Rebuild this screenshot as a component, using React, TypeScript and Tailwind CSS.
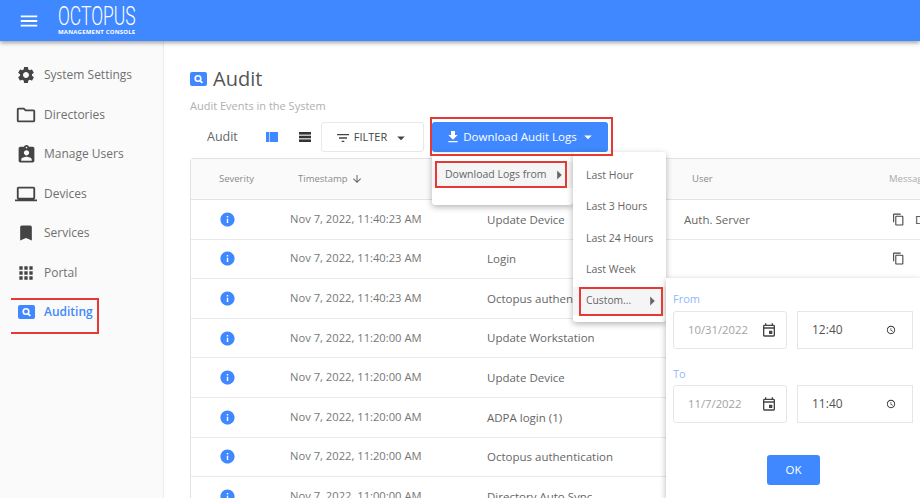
import {
  MdSettings,
  MdOutlineFolder,
  MdAssignmentInd,
  MdOutlineLaptop,
  MdBookmark,
  MdApps,
  MdMenu,
  MdFilterList,
  MdArrowDropDown,
  MdFileDownload,
  MdArrowRight,
  MdInfo,
  MdContentCopy,
  MdOutlineEvent,
  MdAccessTime,
  MdArrowDownward,
} from "react-icons/md";

const sidebarItems = [
  { label: "System Settings", icon: <MdSettings size={20} /> },
  { label: "Directories", icon: <MdOutlineFolder size={22} /> },
  { label: "Manage Users", icon: <MdAssignmentInd size={21} /> },
  { label: "Devices", icon: <MdOutlineLaptop size={22} /> },
  { label: "Services", icon: <MdBookmark size={20} /> },
  { label: "Portal", icon: <MdApps size={20} /> },
];

const rows = [
  { time: "Nov 7, 2022, 11:40:23 AM", event: "Update Device", user: "Auth. Server", message: "D" },
  { time: "Nov 7, 2022, 11:40:23 AM", event: "Login", user: "", message: "" },
  { time: "Nov 7, 2022, 11:40:23 AM", event: "Octopus authentication", user: "", message: "" },
  { time: "Nov 7, 2022, 11:20:00 AM", event: "Update Workstation", user: "", message: "" },
  { time: "Nov 7, 2022, 11:20:00 AM", event: "Update Device", user: "", message: "" },
  { time: "Nov 7, 2022, 11:20:00 AM", event: "ADPA login (1)", user: "", message: "" },
  { time: "Nov 7, 2022, 11:20:00 AM", event: "Octopus authentication", user: "", message: "" },
  { time: "Nov 7, 2022, 11:00:00 AM", event: "Directory Auto Sync", user: "", message: "" },
];

const ranges = ["Last Hour", "Last 3 Hours", "Last 24 Hours", "Last Week"];

// blue rounded square with the magnifier, used in the sidebar and the page title
function AuditIcon() {
  return (
    <svg width="17" height="14" viewBox="0 0 17 14" className="shrink-0">
      <rect width="17" height="14" rx="2" fill="#4088ff" />
      <circle cx="8" cy="6.5" r="2.8" fill="none" stroke="#fff" strokeWidth="1.6" />
      <path d="M10 8.6l2.4 2.3" stroke="#fff" strokeWidth="1.8" />
    </svg>
  );
}

function ColumnsIcon() {
  return (
    <svg width="12" height="10" viewBox="0 0 12 10" className="shrink-0" fill="#4088ff">
      <rect width="3" height="10" />
      <rect x="3.6" width="8.4" height="10" />
    </svg>
  );
}

function RowsIcon() {
  return (
    <svg width="12" height="10" viewBox="0 0 12 10" className="shrink-0" fill="#333">
      <rect width="12" height="2.6" />
      <rect y="3.7" width="12" height="2.6" />
      <rect y="7.4" width="12" height="2.6" />
    </svg>
  );
}

function PickerField({ value, time }: { value: string; time: string }) {
  return (
    <div className="flex gap-[10px]">
      <div className="flex h-[38px] w-[114px] items-center justify-between rounded-[3px] border border-[#e6e6e6] pl-[14px] pr-[9px]">
        <span className="text-[11.3px] text-[#a3a3a3]">{value}</span>
        <MdOutlineEvent size={16} className="text-[#444]" />
      </div>
      <div className="flex h-[38px] w-[116px] items-center justify-between border border-[#e6e6e6] pl-[14px] pr-[16px]">
        <span className="text-[12px] text-[#555]">{time}</span>
        <MdAccessTime size={10} className="text-[#333]" />
      </div>
    </div>
  );
}

export default function App() {
  return (
    <div
      className="relative h-[498px] w-[920px] overflow-hidden bg-white text-[#666]"
      style={{ fontFamily: '"Open Sans", "Noto Sans", sans-serif' }}
    >
      <header className="relative z-10 flex h-[41px] items-center bg-[#4088ff] pl-[18px] text-white shadow-[0_2px_4px_rgba(0,0,0,0.35)]">
        <MdMenu size={22} />
        <div className="ml-[18px] flex flex-col items-start leading-none">
          <span
            className="h-[21px] w-[78px] text-[25px] font-light leading-[21px] whitespace-nowrap origin-left scale-x-[0.7]"
            style={{ fontFamily: "Roboto, sans-serif" }}
          >
            OCTOPUS
          </span>
          <span className="mt-[1px] text-[6px] font-bold leading-[8px] tracking-[0.2px] whitespace-nowrap">
            MANAGEMENT CONSOLE
          </span>
        </div>
      </header>

      <div className="flex h-[457px]">
        <aside className="flex w-[164px] shrink-0 flex-col border-r border-[#ececec] bg-[#fafafa] pt-[14.5px]">
          {sidebarItems.map((item) => (
            <div key={item.label} className="flex h-[39.5px] items-center text-[12px] text-[#707070]">
              <span className="flex w-[44px] justify-center pl-[8px] text-[#444]">{item.icon}</span>
              <span>{item.label}</span>
            </div>
          ))}
          <div className="flex h-[39.5px] items-center text-[12px] font-semibold text-[#4088ff]">
            <span className="flex w-[44px] justify-center pl-[8px]">
              <AuditIcon />
            </span>
            <span>Auditing</span>
          </div>
        </aside>

        <main className="min-w-0 flex-1 pl-[26px] pt-[26px]">
          <div className="flex items-center gap-[6px]">
            <AuditIcon />
            <h1 className="text-[20px] leading-[24px] text-[#555]">Audit</h1>
          </div>
          <p className="mt-[8px] text-[11px] leading-[14px] text-[#b0b0b0]">Audit Events in the System</p>

          <div className="mt-[9px] flex h-[30px] items-center">
            <span className="ml-[17px] mt-[1px] w-[59px] text-[12.5px] text-[#666]">Audit</span>
            <ColumnsIcon />
            <span className="ml-[21px]">
              <RowsIcon />
            </span>
            <div className="ml-[10px] flex h-[30px] w-[103px] items-center justify-center gap-[3px] rounded-[3px] border border-[#e8e8e8] pt-[1px] text-[11px] text-[#444]">
              <MdFilterList size={16} />
              <span>FILTER</span>
              <MdArrowDropDown size={18} className="ml-[2px]" />
            </div>
            <div className="ml-[8px] flex h-[30px] w-[176px] shrink-0 items-center justify-center gap-[2px] rounded-[3px] bg-[#4088ff] pl-[2px] text-[11.5px] font-medium text-white">
              <MdFileDownload size={16} />
              <span className="whitespace-nowrap">Download Audit Logs</span>
              <MdArrowDropDown size={18} />
            </div>
          </div>

          <div className="mt-[6px] w-[760px] rounded-tl-[3px] border border-[#e3e3e3]">
            <div className="grid h-[41px] grid-cols-[99px_197px_197px_197px_70px] items-center border-b border-[#e3e3e3] bg-[#fafafa] text-[9.5px] text-[#8a8a8a]">
              <span className="pl-[28px]">Severity</span>
              <span className="flex items-center gap-[3px] pl-[8px]">
                Timestamp <MdArrowDownward size={12} className="text-[#666]" />
              </span>
              <span />
              <span className="pl-[8px]">User</span>
              <span className="whitespace-nowrap pl-[8px] text-[#aaa]">Message</span>
            </div>
            {rows.map((row, i) => (
              <div
                key={i}
                className="grid h-[39.6px] grid-cols-[99px_197px_197px_197px_70px] items-center border-b border-[#eaeaea] text-[11.5px] text-[#777]"
              >
                <span className="flex pl-[28px] text-[#4088ff]">
                  <MdInfo size={17} />
                </span>
                <span className="whitespace-nowrap text-[11.2px]">{row.time}</span>
                <span className="whitespace-nowrap text-[#666]">{row.event}</span>
                <span className="whitespace-nowrap text-[#666]">{row.user}</span>
                {i < 2 ? (
                  <span className="flex items-center gap-[10px] pl-[11px] text-[#444]">
                    <MdContentCopy size={13} className="shrink-0" />
                    {row.message}
                  </span>
                ) : (
                  <span />
                )}
              </div>
            ))}
          </div>
        </main>
      </div>

      {/* download menu */}
      <div className="absolute left-[432px] top-[153px] z-20 h-[52px] w-[141px] rounded-b-[3px] bg-white pt-[9px] shadow-[0_2px_6px_rgba(0,0,0,0.3)]">
        <div className="flex h-[26px] items-center justify-between bg-[#f5f5f5] pl-[13px] pr-[3px] text-[10.5px] text-[#666]">
          <span className="whitespace-nowrap">Download Logs from</span>
          <MdArrowRight size={22} className="text-[#666]" />
        </div>
      </div>

      {/* range submenu */}
      <div className="absolute left-[573px] top-[152px] z-30 flex h-[170px] w-[93px] flex-col rounded-[3px] bg-white pt-[8px] shadow-[0_2px_6px_rgba(0,0,0,0.3)]">
        {ranges.map((r) => (
          <div key={r} className="flex h-[31.5px] items-center pl-[13px] text-[10.5px] text-[#666]">
            {r}
          </div>
        ))}
        <div className="mt-[1px] flex h-[28px] items-center justify-between bg-[#f5f5f5] pl-[13px] pr-[3px] text-[10.3px] text-[#666]">
          <span className="whitespace-nowrap">Custom...</span>
          <MdArrowRight size={22} />
        </div>
      </div>

      {/* custom date range */}
      <div className="absolute left-[666px] top-[278px] z-30 h-[220px] w-[254px] bg-white pl-[7px] pt-[13px] shadow-[0_2px_6px_rgba(0,0,0,0.3)]">
        <p className="text-[11px] font-medium leading-[16px] text-[#8fb8ff]">From</p>
        <div className="mt-[4px]">
          <PickerField value="10/31/2022" time="12:40" />
        </div>
        <p className="mt-[17px] text-[11px] font-medium leading-[16px] text-[#8fb8ff]">To</p>
        <div className="mt-[3px]">
          <PickerField value="11/7/2022" time="11:40" />
        </div>
        <div className="ml-[94px] mt-[32px] flex h-[30px] w-[53px] items-center justify-center rounded-[3px] bg-[#4088ff] text-[11.5px] font-medium text-white">
          OK
        </div>
      </div>

      {/* red annotation boxes */}
      <div className="absolute left-[11px] top-[298px] z-40 h-[36px] w-[88px] border-2 border-l-0 border-[#e53935]" />
      <div className="absolute left-[430px] top-[117px] z-40 h-[39px] w-[183px] border-2 border-[#e53935]" />
      <div className="absolute left-[435px] top-[161px] z-40 h-[27px] w-[132px] border-2 border-[#e53935]" />
      <div className="absolute left-[579px] top-[287px] z-40 h-[29px] w-[84px] border-2 border-[#e53935]" />
    </div>
  );
}
